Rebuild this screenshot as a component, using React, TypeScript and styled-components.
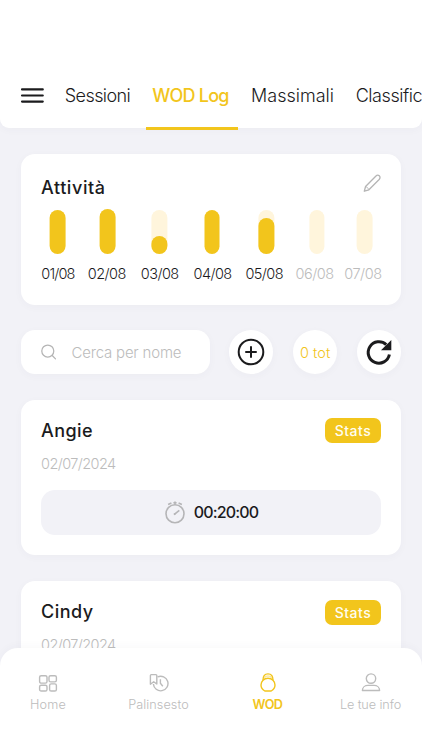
import React from "react";
import styled, { createGlobalStyle } from "styled-components";

const yellow = "#f2c51c";
const pale = "#fff5dc";
const ink = "#1b1b1d";
const muted = "#bcbcbc";
const canvas = "#f2f2f7";
const softShadow = "0 2px 8px rgba(60, 60, 100, 0.03)";

const GlobalStyle = createGlobalStyle`
  * { box-sizing: border-box; }
  body { margin: 0; background: ${canvas}; font-family: Inter, sans-serif; color: ${ink}; }
  svg { display: block; flex: none; }
`;

const Screen = styled.div`
  position: relative;
  width: 422px;
  height: 750px;
  overflow: hidden;
  background: ${canvas};
`;

const Header = styled.header`
  height: 128px;
  background: #fff;
  border-radius: 0 0 9px 9px;
  box-shadow: ${softShadow};
`;

const HeaderRow = styled.div`
  display: flex;
  height: 130px;
  padding-top: 62px;
  overflow: hidden;
`;

const MenuIcon = styled.svg`
  margin: 25px 13px 0 20px;
`;

const Tab = styled.div<{ $width: number; $spacing: number; $gap?: number; $active?: boolean }>`
  flex: none;
  width: ${(p) => p.$width}px;
  height: 68px;
  margin-right: ${(p) => p.$gap ?? 0}px;
  padding: 22px ${(p) => (p.$active ? 3 : 0)}px 0 0;
  border-bottom: 3px solid ${(p) => (p.$active ? yellow : "transparent")};
  color: ${(p) => (p.$active ? yellow : ink)};
  font-size: 18px;
  font-weight: ${(p) => (p.$active ? 500 : 300)};
  letter-spacing: ${(p) => p.$spacing}px;
  line-height: 24px;
  text-align: center;
  white-space: nowrap;
`;

const Content = styled.main`
  display: flex;
  flex-direction: column;
  padding: 26px 21px 0;
`;

const Card = styled.section`
  flex: none;
  background: #fff;
  border-radius: 14px;
  box-shadow: ${softShadow};
`;

const ActivityCard = styled(Card)`
  height: 151px;
  padding: 20px 18px 0 20px;
`;

const CardHead = styled.div`
  display: flex;
  justify-content: space-between;
`;

const Title = styled.h2<{ $spacing: number; $drop?: number }>`
  margin: 0;
  padding-top: ${(p) => p.$drop ?? 0}px;
  height: 26px;
  font-size: 18px;
  font-weight: 500;
  line-height: 26px;
  letter-spacing: ${(p) => p.$spacing}px;
`;

const Pencil = styled.svg`
  margin-right: 1px;
`;

const Days = styled.div`
  display: flex;
  margin-top: 9px;
`;

const Day = styled.div<{ $off?: boolean; $width: number; $gap: number }>`
  display: flex;
  flex: none;
  flex-direction: column;
  align-items: center;
  width: ${(p) => p.$width}px;
  margin-left: ${(p) => p.$gap}px;
  color: ${(p) => (p.$off ? muted : ink)};
`;

const BarSlot = styled.div<{ $shift: number }>`
  display: flex;
  align-items: flex-end;
  width: 15.5px;
  height: 45px;
  transform: translateX(${(p) => p.$shift}px);
`;

const Rail = styled.div`
  display: flex;
  align-items: flex-end;
  width: 100%;
  height: 44px;
  background: ${pale};
  border-radius: 8px;
`;

const Fill = styled.div<{ $height: number }>`
  flex: none;
  width: 100%;
  height: ${(p) => p.$height}px;
  background: ${yellow};
  border-radius: 8px;
`;

const DayLabel = styled.span<{ $spacing: number }>`
  margin-top: 10px;
  font-size: 14.5px;
  font-weight: 300;
  line-height: 20px;
  letter-spacing: ${(p) => p.$spacing}px;
  white-space: nowrap;
`;

const Tools = styled.div`
  display: flex;
  justify-content: space-between;
  align-items: center;
  height: 44px;
  margin: 25px 0 26px;
`;

const Search = styled.label`
  display: flex;
  align-items: center;
  gap: 15.5px;
  width: 188.5px;
  height: 44px;
  padding-left: 19.5px;
  color: ${muted};
  background: #fff;
  border-radius: 14px;
  box-shadow: ${softShadow};
  font-size: 15px;
  font-weight: 300;
  letter-spacing: -0.2px;
`;

const Round = styled.div`
  display: flex;
  align-items: center;
  justify-content: center;
  width: 44px;
  height: 44px;
  color: ${yellow};
  background: #fff;
  border-radius: 50%;
  box-shadow: ${softShadow};
  font-size: 14.5px;
  font-weight: 300;
`;

const LogCard = styled(Card)`
  height: 155px;
  margin-bottom: 26px;
  padding: 18px 20px 0;
`;

const Badge = styled.span<{ $drop: number }>`
  width: 56px;
  height: 25px;
  margin-top: ${(p) => p.$drop}px;
  color: #fffdf0;
  background: ${yellow};
  border-radius: 7px;
  font-size: 14px;
  font-weight: 500;
  line-height: 25px;
  letter-spacing: 0.5px;
  text-align: center;
`;

const DateText = styled.div`
  margin-top: 10px;
  color: ${muted};
  font-size: 14.5px;
  font-weight: 300;
  line-height: 20px;
  letter-spacing: -0.58px;
`;

const TimeBox = styled.div`
  display: flex;
  align-items: center;
  justify-content: center;
  gap: 8px;
  height: 44.5px;
  margin-top: 16px;
  background: ${canvas};
  border-radius: 14px;
  font-size: 16px;
  font-weight: 500;
  letter-spacing: -0.86px;
`;

const BottomNav = styled.nav`
  position: absolute;
  left: 0;
  right: 0;
  bottom: 0;
  display: flex;
  height: 102px;
  padding: 25px 0 0 29.5px;
  background: #fff;
  border-radius: 18px 18px 0 0;
  box-shadow: 0 -2px 8px rgba(60, 60, 100, 0.03);
`;

const NavItem = styled.div<{ $active?: boolean; $width: number; $gap: number; $spacing: number }>`
  display: flex;
  flex: none;
  flex-direction: column;
  align-items: center;
  width: ${(p) => p.$width}px;
  margin-right: ${(p) => p.$gap}px;
  color: ${(p) => (p.$active ? yellow : muted)};
  font-size: 12.7px;
  font-weight: ${(p) => (p.$active ? 600 : 300)};
  letter-spacing: ${(p) => p.$spacing}px;
  line-height: 18px;
  white-space: nowrap;
`;

const NavLabel = styled.span`
  margin-top: 3px;
`;

const HomeIcon = () => (
  <svg width="20" height="20" viewBox="0 0 20 20" fill="none" stroke="currentColor" strokeWidth="1.4">
    <rect x="1.6" y="2.7" width="7.4" height="7.4" rx="1.6" />
    <rect x="11" y="2.7" width="7.4" height="6.2" rx="1.6" />
    <rect x="1.6" y="12.2" width="7.4" height="5.8" rx="1.6" />
    <rect x="11.6" y="10.9" width="6.8" height="7.1" rx="1.6" />
  </svg>
);

const ScheduleIcon = () => (
  <svg width="20" height="20" viewBox="0 0 20 20" fill="none" stroke="currentColor" strokeWidth="1.4">
    <path d="M1.4 2.5Q1.4 1.6 2.3 1.6H6.9Q7.8 1.6 7.8 2.5V11L4.7 8.8L1.4 11.2Z" strokeLinejoin="round" />
    <path d="M8.6 3.9A7.3 7.3 0 1 1 4.4 11" />
    <path d="M11.4 6.3V10.2L13.8 13.2" />
  </svg>
);

const KettlebellIcon = () => (
  <svg width="20" height="20" viewBox="0 0 20 20" fill="none" stroke="currentColor" strokeWidth="1.4">
    <path d="M6.8 18C4.4 16.7 3 14.6 3 12C3 8.2 6 5.2 10 5.2S17 8.2 17 12C17 14.6 15.6 16.7 13.2 18Z" strokeLinejoin="round" />
    <path d="M5 7.2C5 3.2 6.6 0.9 10 0.9S15 3.2 15 7.2" />
    <path d="M6.4 5.3C7 3.6 8.2 3 10 3S13 3.6 13.6 5.3" strokeWidth="0.6" />
  </svg>
);

const PersonIcon = () => (
  <svg width="20" height="20" viewBox="0 0 20 20" fill="none" stroke="currentColor" strokeWidth="1.4">
    <circle cx="10" cy="5.6" r="4.7" />
    <path d="M1.4 17.5C1.4 14.2 4.2 12.4 7 12.4H13C15.8 12.4 18.6 14.2 18.6 17.5Z" strokeLinejoin="round" />
  </svg>
);

const StopwatchIcon = () => (
  <svg width="22" height="24" viewBox="0 0 22 24" fill="none" stroke="#b5b5b7" strokeWidth="1.6">
    <circle cx="11" cy="13.8" r="9" />
    <path d="M11 4.4V1.6M4.1 4.5L7.4 3.1M14.6 3.1L17.9 4.5M9.4 2.8H12.6" />
    <path d="M11 13.8L15.3 10.4" />
    <circle cx="10.7" cy="14.1" r="1.1" fill="#b5b5b7" stroke="none" />
  </svg>
);

const days = [
  { label: "01/08", width: 34.5, gap: -0.3, fill: 44, shift: -0.4, spacing: -0.85 },
  { label: "02/08", width: 38.5, gap: 12.3, fill: 45, shift: 0.6, spacing: -0.55 },
  { label: "03/08", width: 38.5, gap: 14.5, fill: 18.5, shift: -0.6, spacing: -0.55 },
  { label: "04/08", width: 38.5, gap: 14.3, fill: 44, shift: -0.5, spacing: -0.6 },
  { label: "05/08", width: 38.5, gap: 13.2, fill: 36, shift: 2.4, spacing: -0.55 },
  { label: "06/08", width: 38.5, gap: 11.8, fill: 0, shift: 2.4, spacing: -0.5, off: true },
  { label: "07/08", width: 38, gap: 10.2, fill: 0, shift: 1.6, spacing: -0.41, off: true },
];

const logs = [
  { name: "Angie", date: "02/07/2024", time: "00:20:00", spacing: 0.41, drop: 0 },
  { name: "Cindy", date: "02/07/2024", spacing: 0.5, drop: 1 },
];

export default function App() {
  return (
    <>
      <GlobalStyle />
      <Screen>
        <Header>
          <HeaderRow>
            <MenuIcon width="24" height="18" viewBox="0 0 24 18" stroke={ink} strokeWidth="2.1" strokeLinecap="round">
              <path d="M2 2.4H22.8M2 8.5H22.8M2 14.6H22.8" />
            </MenuIcon>
            <Tab $width={81} $spacing={-0.58} $gap={8}>Sessioni</Tab>
            <Tab $width={92} $spacing={-0.74} $active>WOD Log</Tab>
            <Tab $width={109} $spacing={0}>Massimali</Tab>
            <Tab $width={104} $spacing={-0.43}>Classifiche</Tab>
          </HeaderRow>
        </Header>
        <Content>
          <ActivityCard>
            <CardHead>
              <Title $spacing={0.58} $drop={1}>Attività</Title>
              <Pencil width="19" height="19" viewBox="0 0 20 20" fill="none" stroke="#b5b5b5" strokeWidth="1.4">
                <path d="M1.4 18.1L2.7 13.2L13.4 2.3C14.7 1 16 0.9 17.1 1.9S18.2 4.5 17 5.8L6.2 16.6Z" strokeLinejoin="round" />
                <path d="M2.7 13.2Q5.2 13.8 6.2 16.6" strokeWidth="0.9" />
              </Pencil>
            </CardHead>
            <Days>
              {days.map((d) => (
                <Day key={d.label} $off={d.off} $width={d.width} $gap={d.gap}>
                  <BarSlot $shift={d.shift}>
                    {d.fill >= 44 ? (
                      <Fill $height={d.fill} />
                    ) : (
                      <Rail>{d.fill > 0 && <Fill $height={d.fill} />}</Rail>
                    )}
                  </BarSlot>
                  <DayLabel $spacing={d.spacing}>{d.label}</DayLabel>
                </Day>
              ))}
            </Days>
          </ActivityCard>
          <Tools>
            <Search>
              <svg width="15.5" height="16" viewBox="0 0 16 16" fill="none" stroke="#b5b5b5" strokeWidth="1.3" strokeLinecap="round">
                <circle cx="7" cy="7" r="6.2" />
                <path d="M11.6 11.6L15 15.1" />
              </svg>
              Cerca per nome
            </Search>
            <Round>
              <svg width="28" height="28" viewBox="0 0 28 28" fill="none" stroke={ink} strokeWidth="2" strokeLinecap="round">
                <circle cx="14" cy="14" r="12.3" />
                <path d="M14 9V19M9 14H19" />
              </svg>
            </Round>
            <Round>0 tot</Round>
            <Round>
              <svg width="28" height="28" viewBox="0 0 28 28" fill="none" stroke={ink} strokeWidth="3">
                <path d="M21.2 6.6A10.7 10.7 0 1 0 24.4 16.5" />
                <path d="M26.3 2V12.3H16Z" fill={ink} stroke="none" />
              </svg>
            </Round>
          </Tools>
          {logs.map((l) => (
            <LogCard key={l.name}>
              <CardHead>
                <Title $spacing={l.spacing}>{l.name}</Title>
                <Badge $drop={l.drop}>Stats</Badge>
              </CardHead>
              <DateText>{l.date}</DateText>
              {l.time && (
                <TimeBox>
                  <StopwatchIcon />
                  {l.time}
                </TimeBox>
              )}
            </LogCard>
          ))}
        </Content>
        <BottomNav>
          <NavItem $width={37} $gap={61.5} $spacing={0.22}><HomeIcon /><NavLabel>Home</NavLabel></NavItem>
          <NavItem $width={61} $gap={63.5} $spacing={0.06}><ScheduleIcon /><NavLabel>Palinsesto</NavLabel></NavItem>
          <NavItem $width={30} $gap={57} $spacing={-0.58} $active><KettlebellIcon /><NavLabel>WOD</NavLabel></NavItem>
          <NavItem $width={62} $gap={0} $spacing={-0.1}><PersonIcon /><NavLabel>Le tue info</NavLabel></NavItem>
        </BottomNav>
      </Screen>
    </>
  );
}
